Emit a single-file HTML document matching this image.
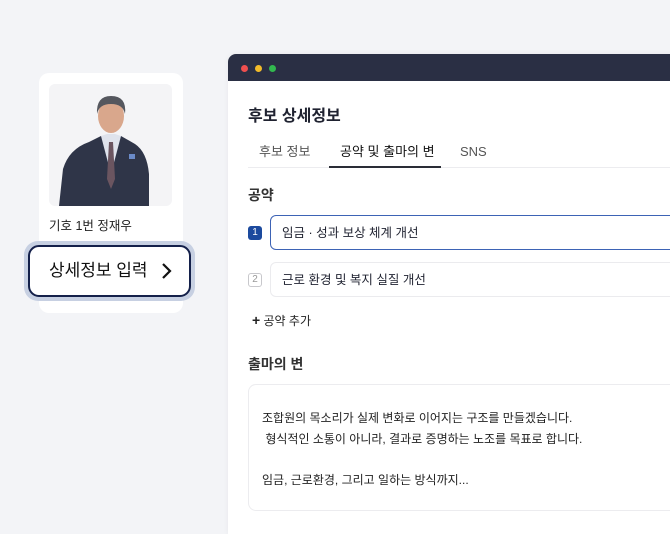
<!DOCTYPE html>
<html><head><meta charset="utf-8"><style>
*{margin:0;padding:0;box-sizing:border-box}
body{width:670px;height:519px;background:#f3f4f7;font-family:"Liberation Sans","Noto Sans CJK KR",sans-serif;position:relative;overflow:hidden;color:#1f2230}
.a{position:absolute;line-height:1.2}
</style></head><body>
<div class="a" style="left:39px;top:73px;width:144px;height:240px;background:#fff;border-radius:10px"></div>
<div class="a" style="left:49px;top:84px;width:123px;height:122px;background:#f4f4f6;border-radius:6px;overflow:hidden">
<svg width="123" height="122" viewBox="0 0 123 122">
<path d="M10 122 L14 85 Q20 65 40 58 L52 52 L62 56 L72 52 L86 60 Q98 68 100 90 L100 122Z" fill="#2f3548"/>
<path d="M52 52 L62 90 L72 52 L66 50 L58 50Z" fill="#dfe3ec"/>
<path d="M60 58 L64 58 L66 95 L62 105 L58 95Z" fill="#6b5560"/>
<ellipse cx="62" cy="32" rx="13" ry="17" fill="#d9a78c"/>
<path d="M48 30 Q47 12 62 12 Q78 12 76 30 Q74 20 62 20 Q50 20 48 30Z" fill="#55575e"/>
<rect x="80" y="70" width="6" height="5" fill="#6a8ac8"/>
</svg></div>
<div class="a" style="left:49px;top:219px;font-size:12.5px;color:#222">기호 1번 정재우</div>
<div class="a" style="left:24px;top:241px;width:171px;height:60px;border-radius:14px;background:#c7d0e2"></div>
<div class="a" style="left:28px;top:245px;width:163px;height:52px;border-radius:11px;background:#fff;border:2px solid #14204a;font-size:17px;line-height:48px;padding-left:19px;color:#111">상세정보 입력<span style="position:absolute;left:130px;top:0">
<svg width="14" height="48" viewBox="0 0 14 48"><path d="M3 17 L10 24 L3 31" fill="none" stroke="#111" stroke-width="2.2"/></svg></span></div>

<div class="a" style="left:228px;top:54px;width:450px;height:480px;background:#fff;border-radius:8px 0 0 0;overflow:hidden;box-shadow:0 0 6px rgba(0,0,0,.05)">
<div style="height:27px;background:#2a2f44;position:relative">
<span class="a" style="left:13px;top:11px;width:7px;height:7px;border-radius:50%;background:#ef4f4f"></span>
<span class="a" style="left:27px;top:11px;width:7px;height:7px;border-radius:50%;background:#f2bb2a"></span>
<span class="a" style="left:41px;top:11px;width:7px;height:7px;border-radius:50%;background:#32b84f"></span>
</div>
</div>
<div class="a" style="left:248px;top:107px;font-size:16px;font-weight:bold">후보 상세정보</div>
<div class="a" style="left:259px;top:144px;font-size:13px;color:#555">후보 정보</div>
<div class="a" style="left:340px;top:144px;font-size:13px;color:#111">공약 및 출마의 변</div>
<div class="a" style="left:460px;top:144px;font-size:13px;color:#555;font-family:'Liberation Sans',sans-serif">SNS</div>
<div class="a" style="left:248px;top:167px;width:430px;height:1px;background:#ececef"></div>
<div class="a" style="left:329px;top:166px;width:112px;height:2px;background:#2a2d36"></div>
<div class="a" style="left:248px;top:187px;font-size:14px;font-weight:bold;color:#333">공약</div>
<div class="a" style="left:248px;top:226px;width:14px;height:14px;border-radius:3px;background:#1c4a9e;color:#fff;font-size:10px;text-align:center;line-height:14px">1</div>
<div class="a" style="left:270px;top:215px;width:420px;height:35px;border:1px solid #3d63b5;border-radius:6px;font-size:12.5px;line-height:35px;padding-left:11px">임금 · 성과 보상 체계 개선</div>
<div class="a" style="left:248px;top:273px;width:14px;height:14px;border-radius:3px;border:1px solid #c8c8cc;color:#999;font-size:10px;text-align:center;line-height:12px">2</div>
<div class="a" style="left:270px;top:262px;width:420px;height:35px;border:1px solid #ebebee;border-radius:6px;font-size:12.5px;line-height:35px;padding-left:11px">근로 환경 및 복지 실질 개선</div>
<div class="a" style="left:252px;top:312px;font-size:12px;color:#222"><b style="font-size:14px">+</b> 공약 추가</div>
<div class="a" style="left:248px;top:356px;font-size:14px;font-weight:bold;color:#333">출마의 변</div>
<div class="a" style="left:248px;top:384px;width:440px;height:127px;border:1px solid #ececef;border-radius:8px;font-size:12px;line-height:20.5px;padding:23px 0 0 13px;color:#222">조합원의 목소리가 실제 변화로 이어지는 구조를 만들겠습니다.<br>&nbsp;형식적인 소통이 아니라, 결과로 증명하는 노조를 목표로 합니다.<br><br>임금, 근로환경, 그리고 일하는 방식까지...</div>
</body></html>
